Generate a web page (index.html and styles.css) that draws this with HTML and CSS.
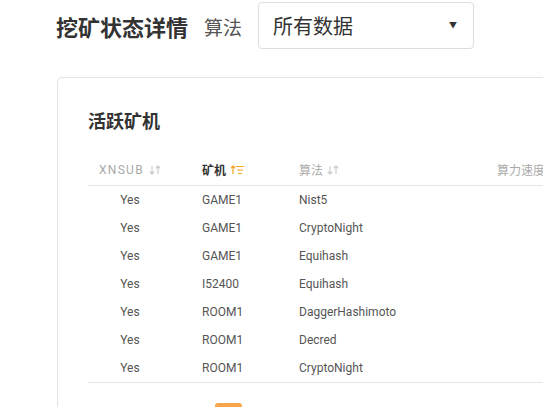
FILE: index.html
```html
<!DOCTYPE html>
<html lang="zh">
<head>
<meta charset="utf-8">
<link rel="stylesheet" href="styles.css">
</head>
<body>
<div class="page">
  <header class="topbar">
    <h1 class="title">挖矿状态详情</h1>
    <span class="label">算法</span>
    <div class="select">
      <span class="select-text">所有数据</span>
      <span class="caret">▼</span>
    </div>
  </header>

  <section class="card">
    <h2 class="card-title">活跃矿机</h2>
    <div class="table">
      <div class="row head">
        <div class="cell c1">XNSUB <svg class="sort" width="12" height="10" viewBox="0 0 12 10"><path d="M3 1v8M0.8 6.6L3 9l2.2-2.4M9 9V1M6.8 3.4L9 1l2.2 2.4" fill="none" stroke="#ccc" stroke-width="1.2"/></svg></div>
        <div class="cell active">矿机 <svg class="sort" width="14" height="10" viewBox="0 0 14 10"><path d="M3 9V1M0.8 3.4L3 1l2.2 2.4M6 1.5h8M7 5h6M8 8.5h4" fill="none" stroke="#f5a623" stroke-width="1.2"/></svg></div>
        <div class="cell">算法 <svg class="sort" width="12" height="10" viewBox="0 0 12 10"><path d="M3 1v8M0.8 6.6L3 9l2.2-2.4M9 9V1M6.8 3.4L9 1l2.2 2.4" fill="none" stroke="#ccc" stroke-width="1.2"/></svg></div>
        <div class="cell">算力速度</div>
      </div>
      <div class="row"><div class="cell c1">Yes</div><div class="cell">GAME1</div><div class="cell">Nist5</div><div class="cell"></div></div>
      <div class="row"><div class="cell c1">Yes</div><div class="cell">GAME1</div><div class="cell">CryptoNight</div><div class="cell"></div></div>
      <div class="row"><div class="cell c1">Yes</div><div class="cell">GAME1</div><div class="cell">Equihash</div><div class="cell"></div></div>
      <div class="row"><div class="cell c1">Yes</div><div class="cell">I52400</div><div class="cell">Equihash</div><div class="cell"></div></div>
      <div class="row"><div class="cell c1">Yes</div><div class="cell">ROOM1</div><div class="cell">DaggerHashimoto</div><div class="cell"></div></div>
      <div class="row"><div class="cell c1">Yes</div><div class="cell">ROOM1</div><div class="cell">Decred</div><div class="cell"></div></div>
      <div class="row last"><div class="cell c1">Yes</div><div class="cell">ROOM1</div><div class="cell">CryptoNight</div><div class="cell"></div></div>
    </div>
    <div class="pager">
      <span class="page-btn current">1</span>
    </div>
  </section>
</div>
</body>
</html>
```

FILE: styles.css
```css
html, body {
  margin: 0;
  padding: 0;
  background: #fff;
  overflow: hidden;
}
body {
  width: 543px;
  height: 407px;
  font-family: Roboto, "Noto Sans CJK SC", sans-serif;
  color: #333;
}
.page {
  width: 760px;
}
.topbar {
  display: flex;
  align-items: center;
  gap: 16px;
  padding: 2px 0 0 56px;
  height: 47px;
}
.title {
  margin: 0;
  font-size: 22px;
  font-weight: 700;
  color: #333;
  line-height: 1;
  font-family: "Noto Sans CJK SC", sans-serif;
}
.label {
  margin-top: 1px;
  font-size: 19px;
  color: #555;
  line-height: 1;
  font-family: "Noto Sans CJK SC", sans-serif;
}
.select {
  box-sizing: border-box;
  width: 216px;
  height: 47px;
  border: 1px solid #ddd;
  border-radius: 4px;
  display: flex;
  align-items: center;
  justify-content: space-between;
  padding: 0 16px 0 14px;
}
.select-text {
  font-size: 20px;
  color: #333;
  font-family: "Noto Sans CJK SC", sans-serif;
  line-height: 1;
}
.caret {
  font-size: 8px;
  color: #333;
  margin-top: -2px;
}
.card {
  margin: 28px 0 0 57px;
  border: 1px solid #e3e3e3;
  border-radius: 5px;
  padding: 24px 0 0 30px;
  height: 500px;
}
.card-title {
  margin: 0;
  font-size: 18px;
  font-weight: 700;
  line-height: 36px;
  color: #333;
  font-family: "Noto Sans CJK SC", sans-serif;
}
.table {
  margin-top: 16px;
}
.row {
  display: grid;
  grid-template-columns: 84px 97px 198px 1fr;
  height: 28px;
  align-items: center;
  font-size: 12px;
  color: #555;
}
.row.head {
  height: 31px;
  border-bottom: 1px solid #e6e6e6;
  color: #aaa;
  font-size: 12px;
}
.row.last {
  border-bottom: 1px solid #e6e6e6;
}
.cell {
  padding-left: 30px;
  white-space: nowrap;
  display: flex;
  align-items: center;
  gap: 4px;
}
.cell.c1 {
  padding-left: 0;
  justify-content: center;
}
.head .c1 {
  letter-spacing: 1.3px;
  gap: 5px;
}
.cell.active {
  color: #333;
  font-weight: 700;
}
.sort {
  display: block;
}
.pager {
  display: flex;
  padding-left: 127px;
  margin-top: 20px;
}
.page-btn {
  width: 27px;
  height: 27px;
  border-radius: 3px;
  font-size: 12px;
  display: flex;
  align-items: center;
  justify-content: center;
}
.page-btn.current {
  background: #f5a54a;
  color: #fff;
}
```
